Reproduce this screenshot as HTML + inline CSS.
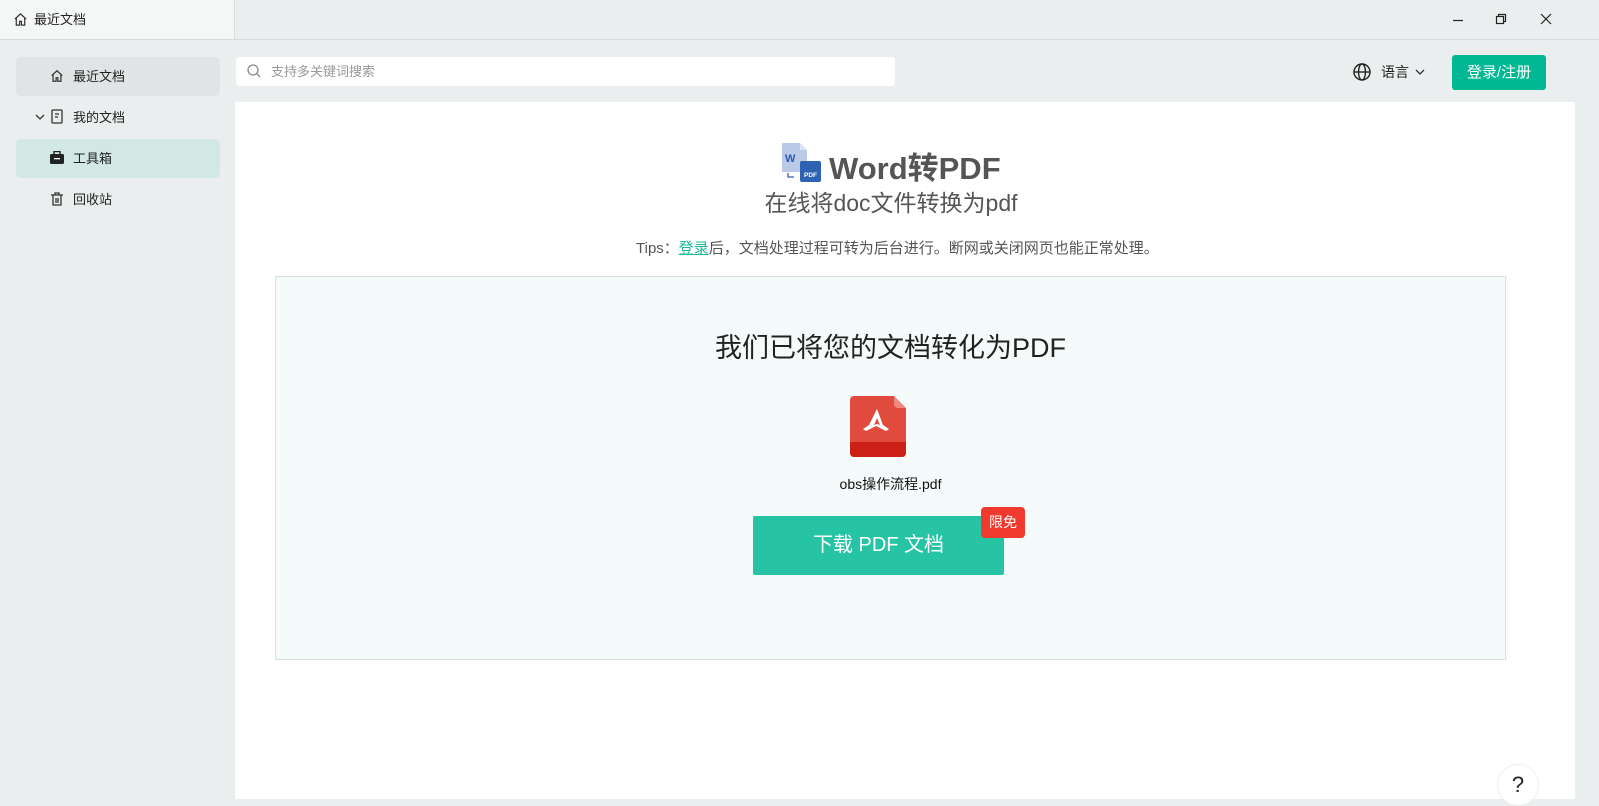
<!DOCTYPE html>
<html><head><meta charset="utf-8"><style>
*{margin:0;padding:0;box-sizing:border-box}
body{width:1599px;height:799px;overflow:hidden;background:#ebeeee;font-family:"Liberation Sans","Noto Sans CJK SC",sans-serif;position:relative;color:#222}
.abs{position:absolute}
.tab{left:0;top:0;width:235px;height:40px;background:#f5f7f7;border-right:1px solid #dcdcdc;font-size:13px;line-height:40px;padding-left:34px}
.topline{left:0;top:39px;width:1599px;height:1px;background:#d9dbdb}
.nav{left:16px;width:204px;height:39px;border-radius:5px;font-size:13px;line-height:39px;padding-left:57px}
.search{left:236px;top:57px;width:659px;height:29px;background:#fff;border-radius:3px;font-size:13px;color:#999;line-height:29px;padding-left:35px}
.main{left:235px;top:102px;width:1340px;height:697px;background:#fff}
.box{left:275px;top:276px;width:1231px;height:384px;background:#f5fafa;border:1px solid #dcdede}
</style></head><body>
<div class="abs tab">最近文档</div>
<svg class="abs" style="left:13px;top:12px" width="15" height="15" viewBox="0 0 16 16" fill="none" stroke="#333" stroke-width="1.3"><path d="M2 7.5L8 2l6 5.5M3.5 6.5V14h3.5v-4h2v4h3.5V6.5"/></svg>
<div class="abs topline"></div>
<svg class="abs" style="left:1452px;top:14px" width="12" height="12" stroke="#222" stroke-width="1.2"><path d="M1 6.5h10"/></svg>
<svg class="abs" style="left:1495px;top:13px" width="12" height="12" fill="none" stroke="#222" stroke-width="1.2"><rect x="1.5" y="3.5" width="7" height="7"/><path d="M3.5 3.5V1.5h7v7h-2"/></svg>
<svg class="abs" style="left:1540px;top:13px" width="12" height="12" stroke="#222" stroke-width="1.2"><path d="M1 1l10 10M11 1L1 11"/></svg>

<div class="abs nav" style="top:57px;background:#e1e4e5">最近文档</div>
<svg class="abs" style="left:50px;top:69px" width="14" height="14" viewBox="0 0 16 16" fill="none" stroke="#333" stroke-width="1.4"><path d="M2 7.5L8 2l6 5.5M3.5 6.5V14h3.5v-4h2v4h3.5V6.5"/></svg>
<div class="abs nav" style="top:98px">我的文档</div>
<svg class="abs" style="left:35px;top:113px" width="10" height="8" fill="none" stroke="#333" stroke-width="1.3"><path d="M1 2l4 4 4-4"/></svg>
<svg class="abs" style="left:51px;top:109px" width="12" height="15" fill="none" stroke="#333" stroke-width="1.3"><rect x="1" y="1" width="10" height="13" rx="1"/><path d="M4 5h4M4 8h3"/></svg>
<div class="abs nav" style="top:139px;background:#d1e8e5">工具箱</div>
<svg class="abs" style="left:50px;top:151px" width="14" height="13"><rect x="4" y="0.5" width="6" height="4" fill="none" stroke="#222" stroke-width="1.4"/><rect x="0" y="3" width="14" height="10" rx="1.5" fill="#222"/><rect x="4" y="7" width="6" height="1.3" fill="#fff"/></svg>
<div class="abs nav" style="top:180px">回收站</div>
<svg class="abs" style="left:51px;top:192px" width="12" height="14" fill="none" stroke="#333" stroke-width="1.3"><path d="M0 3h12M4 3V1h4v2M2 3v10h8V3M5 6v5M7 6v5"/></svg>

<div class="abs search">支持多关键词搜索</div>
<svg class="abs" style="left:247px;top:64px" width="14" height="14" fill="none" stroke="#888" stroke-width="1.3"><circle cx="6" cy="6" r="5"/><path d="M10 10l3 3"/></svg>

<svg class="abs" style="left:1353px;top:63px" width="18" height="18" fill="none" stroke="#222" stroke-width="1.4"><circle cx="9" cy="9" r="8"/><ellipse cx="9" cy="9" rx="3.5" ry="8"/><path d="M1 9h16"/></svg>
<div class="abs" style="left:1381px;top:62px;font-size:14px">语言</div>
<svg class="abs" style="left:1415px;top:69px" width="10" height="7" fill="none" stroke="#333" stroke-width="1.3"><path d="M1 1l4 4 4-4"/></svg>
<div class="abs" style="left:1452px;top:55px;width:94px;height:35px;background:#00b894;border-radius:3px;color:#fff;font-size:15px;line-height:35px;text-align:center">登录/注册</div>

<div class="abs main"></div>
<svg class="abs" style="left:780px;top:141px" width="42" height="42"><path d="M2 2h18l7 7v22H2z" fill="#b9c9e6"/><path d="M20 2v7h7z" fill="#dbe4f4"/><text x="5" y="21" font-size="11" font-weight="bold" fill="#2a5bb0" font-family="Liberation Sans">W</text><rect x="20" y="20" width="21" height="21" rx="2" fill="#2f62b4"/><text x="24" y="36" font-size="6.5" fill="#fff" font-weight="bold" font-family="Liberation Sans">PDF</text><path d="M8 32v4h6" fill="none" stroke="#2f62b4" stroke-width="1.3"/></svg>
<div class="abs" style="left:829px;top:143px;font-size:31px;font-weight:bold;color:#555">Word转PDF</div>
<div class="abs" style="left:0;width:1782px;top:184px;text-align:center;font-size:23px;color:#555">在线将doc文件转换为pdf</div>
<div class="abs" style="left:636px;top:237px;font-size:15px;color:#555">Tips：<span style="color:#1abc9c;text-decoration:underline">登录</span>后，文档处理过程可转为后台进行。断网或关闭网页也能正常处理。</div>

<div class="abs box"></div>
<div class="abs" style="left:275px;width:1231px;top:326px;text-align:center;font-size:27px;color:#222">我们已将您的文档转化为PDF</div>
<svg class="abs" style="left:850px;top:396px" width="56" height="62"><path d="M4 0h40l12 12v45a4 4 0 0 1-4 4H4a4 4 0 0 1-4-4V4a4 4 0 0 1 4-4z" fill="#e04b3e"/><path d="M0 46h56v11a4 4 0 0 1-4 4H4a4 4 0 0 1-4-4z" fill="#cc2017"/><path d="M44 0l12 12h-8a4 4 0 0 1-4-4z" fill="#f08a80"/><path d="M27 13l-8 16-6 4 3 2 10-5 10 5 3-2-6-4z" fill="#fff"/><path d="M27 22l-3 7 3-1 3 1z" fill="#e04b3e"/></svg>
<div class="abs" style="left:275px;width:1231px;top:474px;text-align:center;font-size:14px;color:#111">obs操作流程.pdf</div>
<div class="abs" style="left:753px;top:516px;width:251px;height:59px;background:#26c4a5;border-radius:2px;color:#fff;font-size:20px;line-height:59px;text-align:center">下载 PDF 文档</div>
<div class="abs" style="left:981px;top:507px;width:44px;height:31px;background:#f03a2e;border-radius:4px;color:#fff;font-size:14px;line-height:31px;text-align:center">限免</div>
<div class="abs" style="left:1497px;top:764px;width:42px;height:42px;border-radius:50%;background:#fff;border:1px solid #eee;font-size:22px;text-align:center;line-height:40px;color:#222">?</div>
</body></html>
